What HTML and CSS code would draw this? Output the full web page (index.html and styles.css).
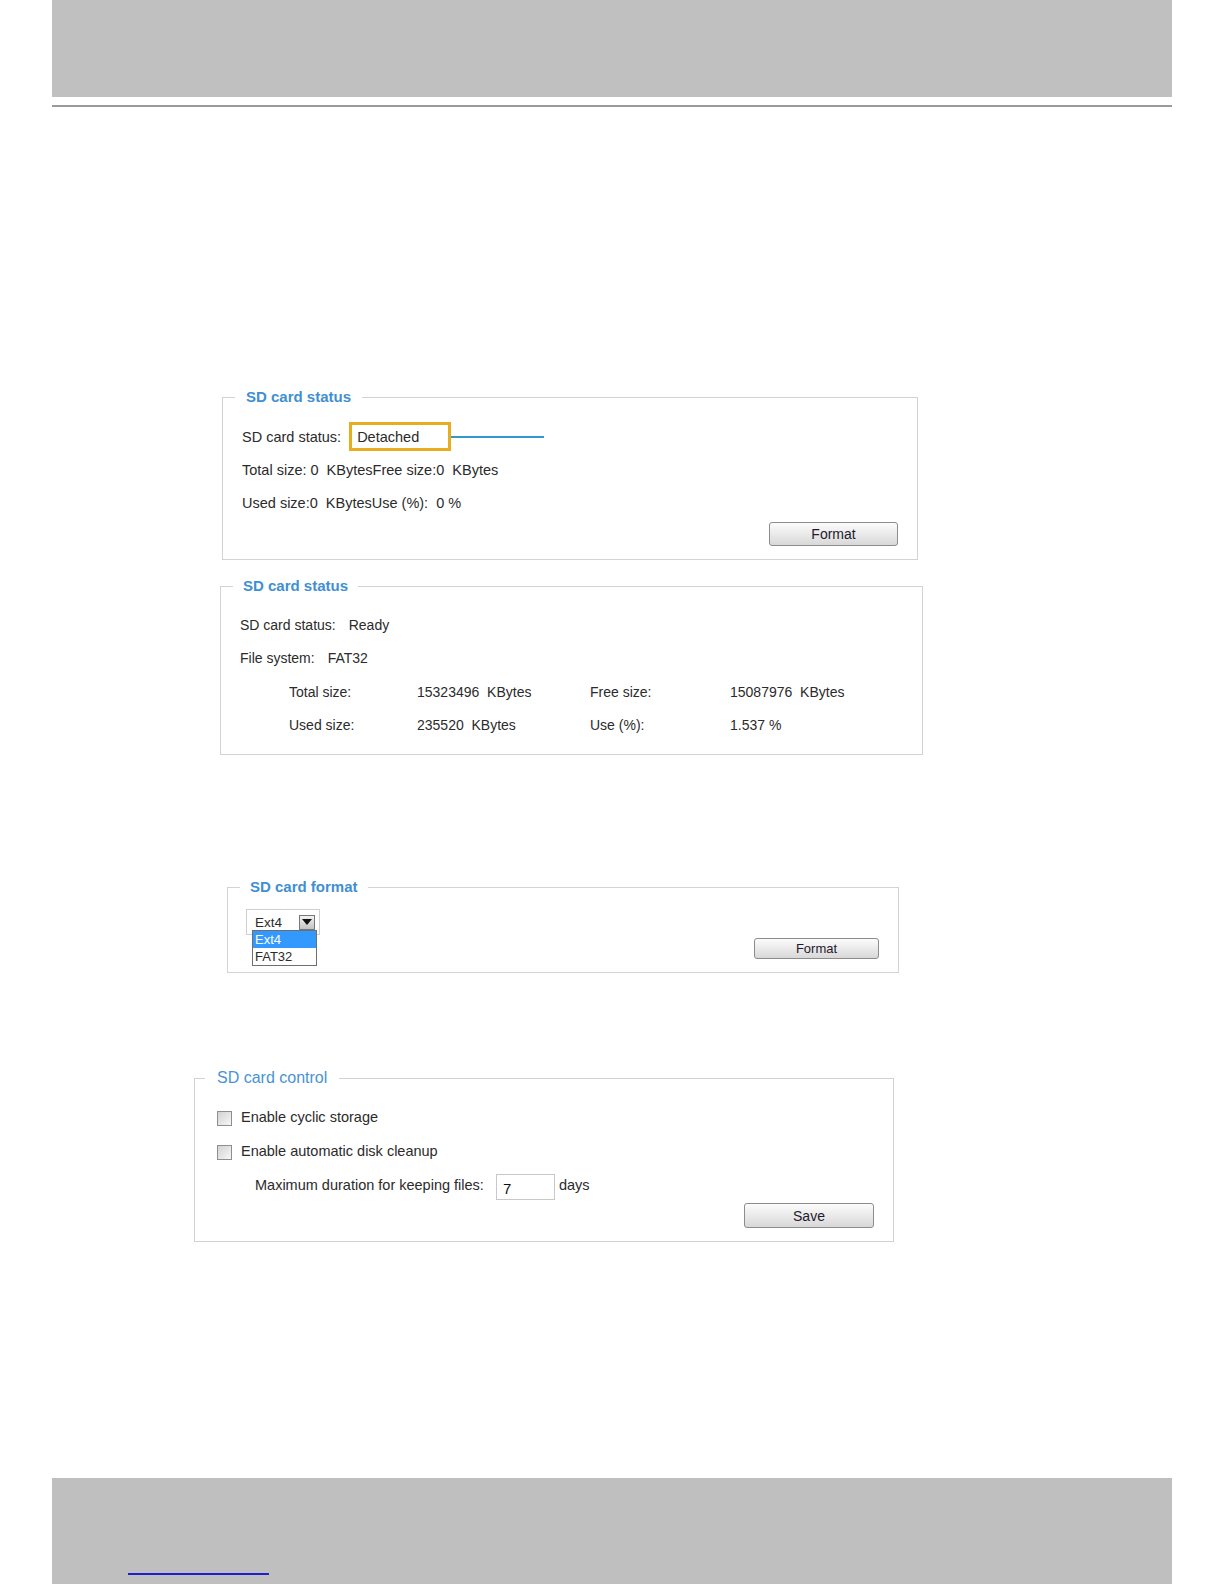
FILE: index.html
```html
<!DOCTYPE html>
<html lang="en">

<head>
  <meta charset="UTF-8">
  <meta name="viewport" content="width=device-width, initial-scale=1.0">
  <title>SD Card Management</title>

  <link rel="stylesheet" href="styles.css">
</head>

<body>
  <header class="page-head"></header>
  <div class="head-rule"></div>

  <main>
    <fieldset class="panel panel-status">
      <legend>SD card status</legend>
      <div class="panel-body">
        <div class="row">
          <span>SD card status:</span>
          <span class="status-value">Detached</span>
          <span class="callout-line"></span>
        </div>
        <div class="row">Total size: 0&nbsp; KBytesFree size:0&nbsp; KBytes</div>
        <div class="row">Used size:0&nbsp; KBytesUse (%):&nbsp; 0 %</div>
        <div class="actions">
          <button class="btn">Format</button>
        </div>
      </div>
    </fieldset>

    <fieldset class="panel panel-info">
      <legend>SD card status</legend>
      <div class="panel-body">
        <div class="row">
          <span>SD card status:</span>
          <span class="info-value">Ready</span>
        </div>
        <div class="row">
          <span>File system:</span>
          <span class="info-value">FAT32</span>
        </div>
        <div class="size-grid">
          <span>Total size:</span>
          <span>15323496&nbsp; KBytes</span>
          <span>Free size:</span>
          <span>15087976&nbsp; KBytes</span>
          <span>Used size:</span>
          <span>235520&nbsp; KBytes</span>
          <span>Use (%):</span>
          <span>1.537 %</span>
        </div>
      </div>
    </fieldset>

    <fieldset class="panel panel-format">
      <legend>SD card format</legend>
      <div class="panel-body format-row">
        <div class="select-wrap">
          <span>Ext4</span>
          <span class="select-arrow"><span class="triangle"></span></span>
          <ul class="dropdown-list">
            <li class="is-selected">Ext4</li>
            <li>FAT32</li>
          </ul>
        </div>
        <button class="btn btn-small">Format</button>
      </div>
    </fieldset>

    <fieldset class="panel panel-control">
      <legend>SD card control</legend>
      <div class="panel-body">
        <label class="row check-row">
          <input type="checkbox" class="check">
          <span>Enable cyclic storage</span>
        </label>
        <label class="row check-row">
          <input type="checkbox" class="check">
          <span>Enable automatic disk cleanup</span>
        </label>
        <div class="row duration-row">
          <span>Maximum duration for keeping files:</span>
          <input class="days-input" value="7">
          <span class="days-unit">days</span>
        </div>
        <div class="actions">
          <button class="btn btn-save">Save</button>
        </div>
      </div>
    </fieldset>
  </main>

  <footer class="page-foot">
    <a href="#" class="foot-link"></a>
  </footer>
</body>

</html>
```

FILE: styles.css
```css
* {
  box-sizing: border-box;
}

body {
  background: #fff;
  color: #2b2b2b;
  font-family: "Liberation Sans", Arial, sans-serif;
  margin: 0;
}

.page-head {
  background: #c0c0c0;
  height: 97px;
  margin: 0 52px;
}

.head-rule {
  background: #9a9a9a;
  height: 2px;
  margin: 8px 52px 0;
}

/* panels */

.panel {
  border: 1px solid #d3d3d3;
  margin: 0;
  min-width: 0;
  padding: 0;
}

.panel legend {
  color: #3f8fd2;
  font-size: 15px;
  font-weight: bold;
  line-height: 20px;
  margin-left: 12px;
  padding: 0 10px;
}

.panel-body {
  padding: 12px 19px 13px;
}

.row {
  align-items: center;
  display: flex;
  font-size: 14px;
  height: 33px;
  white-space: pre;
}

.actions {
  display: flex;
  justify-content: flex-end;
}

.btn {
  background: linear-gradient(#fcfcfc, #d8d8d8);
  border: 1px solid #8c8c8c;
  border-radius: 3px;
  color: #1f1a2e;
  font: 14px "Liberation Sans", Arial, sans-serif;
  height: 24px;
  padding: 0;
  width: 129px;
}

.btn:hover {
  cursor: pointer;
}

/* first status panel */

.panel-status {
  margin: 280px 0 0 222px;
  width: 696px;
}

.panel-status legend {
  padding: 0 11px;
}

.panel-status .panel-body {
  padding-top: 13px;
}

.panel-status .row {
  font-size: 14.5px;
}

.panel-status .actions {
  margin-top: 3px;
}

.status-value {
  align-items: center;
  border: 3px solid #e8ad1f;
  display: flex;
  height: 29px;
  margin-left: 8px;
  padding-left: 5px;
  width: 102px;
}

.callout-line {
  background: #3399cc;
  height: 2px;
  margin-top: 1px;
  width: 93px;
}

/* second status panel */

.panel-info {
  margin: 16px 0 0 220px;
  width: 703px;
}

.info-value {
  margin-left: 13px;
}

.size-grid {
  align-items: center;
  display: grid;
  font-size: 14px;
  grid-auto-rows: 33px;
  grid-template-columns: 128px 173px 140px auto;
  margin-top: 1px;
  padding-left: 49px;
  white-space: pre;
}

/* format panel */

.panel-format {
  margin: 122px 0 0 227px;
  width: 672px;
}

.panel-format .panel-body {
  padding: 12px 19px 13px 18px;
}

.format-row {
  align-items: flex-end;
  display: flex;
  height: 75px;
  justify-content: space-between;
}

.select-wrap {
  align-items: center;
  align-self: flex-start;
  border: 1px solid #cfcfcf;
  display: flex;
  font-size: 13.5px;
  height: 26px;
  padding-left: 8px;
  position: relative;
  width: 74px;
}

.select-arrow {
  align-items: center;
  background: linear-gradient(#f2f2f2, #c4c4c4);
  border: 1px solid #777;
  display: flex;
  height: 15px;
  justify-content: center;
  margin: 0 4px 0 auto;
  width: 16px;
}

.triangle {
  border-left: 5px solid transparent;
  border-right: 5px solid transparent;
  border-top: 6px solid #111;
  height: 0;
  width: 0;
}

.dropdown-list {
  background: #fff;
  border: 1px solid #6f6f6f;
  font-size: 13px;
  left: 5px;
  list-style: none;
  margin: 0;
  padding: 0;
  position: absolute;
  top: 20px;
  width: 65px;
}

.dropdown-list li {
  height: 17px;
  line-height: 17px;
  padding-left: 2px;
}

.dropdown-list .is-selected {
  background: #3399ff;
  color: #fff;
}

.btn-small {
  font-size: 13px;
  height: 21px;
  width: 125px;
}

/* control panel */

.panel-control {
  margin: 95px 0 0 194px;
  width: 700px;
}

.panel-control legend {
  color: #4793d6;
  font-size: 16px;
  font-weight: normal;
  margin-left: 10px;
  padding: 0 12px;
}

.panel-control .panel-body {
  padding: 12px 19px 13px 22px;
}

.panel-control .row {
  font-size: 14.5px;
  height: 34px;
}

.panel-control .actions {
  margin-top: 1px;
}

.check {
  appearance: none;
  background: linear-gradient(135deg, #d2d2d2, #f7f7f7);
  border: 1px solid #8e8e8e;
  height: 15px;
  margin: 3px 9px 0 0;
  width: 15px;
}

.duration-row {
  padding-left: 38px;
}

.days-input {
  border: 1px solid #c8c8c8;
  color: #111;
  font: 15px "Liberation Sans", Arial, sans-serif;
  height: 26px;
  margin: 3px 0 0 12px;
  padding: 3px 6px 0;
  width: 59px;
}

.days-unit {
  margin-left: 4px;
}

.btn-save {
  height: 25px;
  width: 130px;
}

/* footer */

.page-foot {
  background: #bfbfbf;
  height: 106px;
  margin: 236px 52px 0;
  padding: 95px 0 0 76px;
}

.foot-link {
  border-bottom: 2px solid #1f1fd0;
  display: block;
  height: 0;
  width: 141px;
}
```
